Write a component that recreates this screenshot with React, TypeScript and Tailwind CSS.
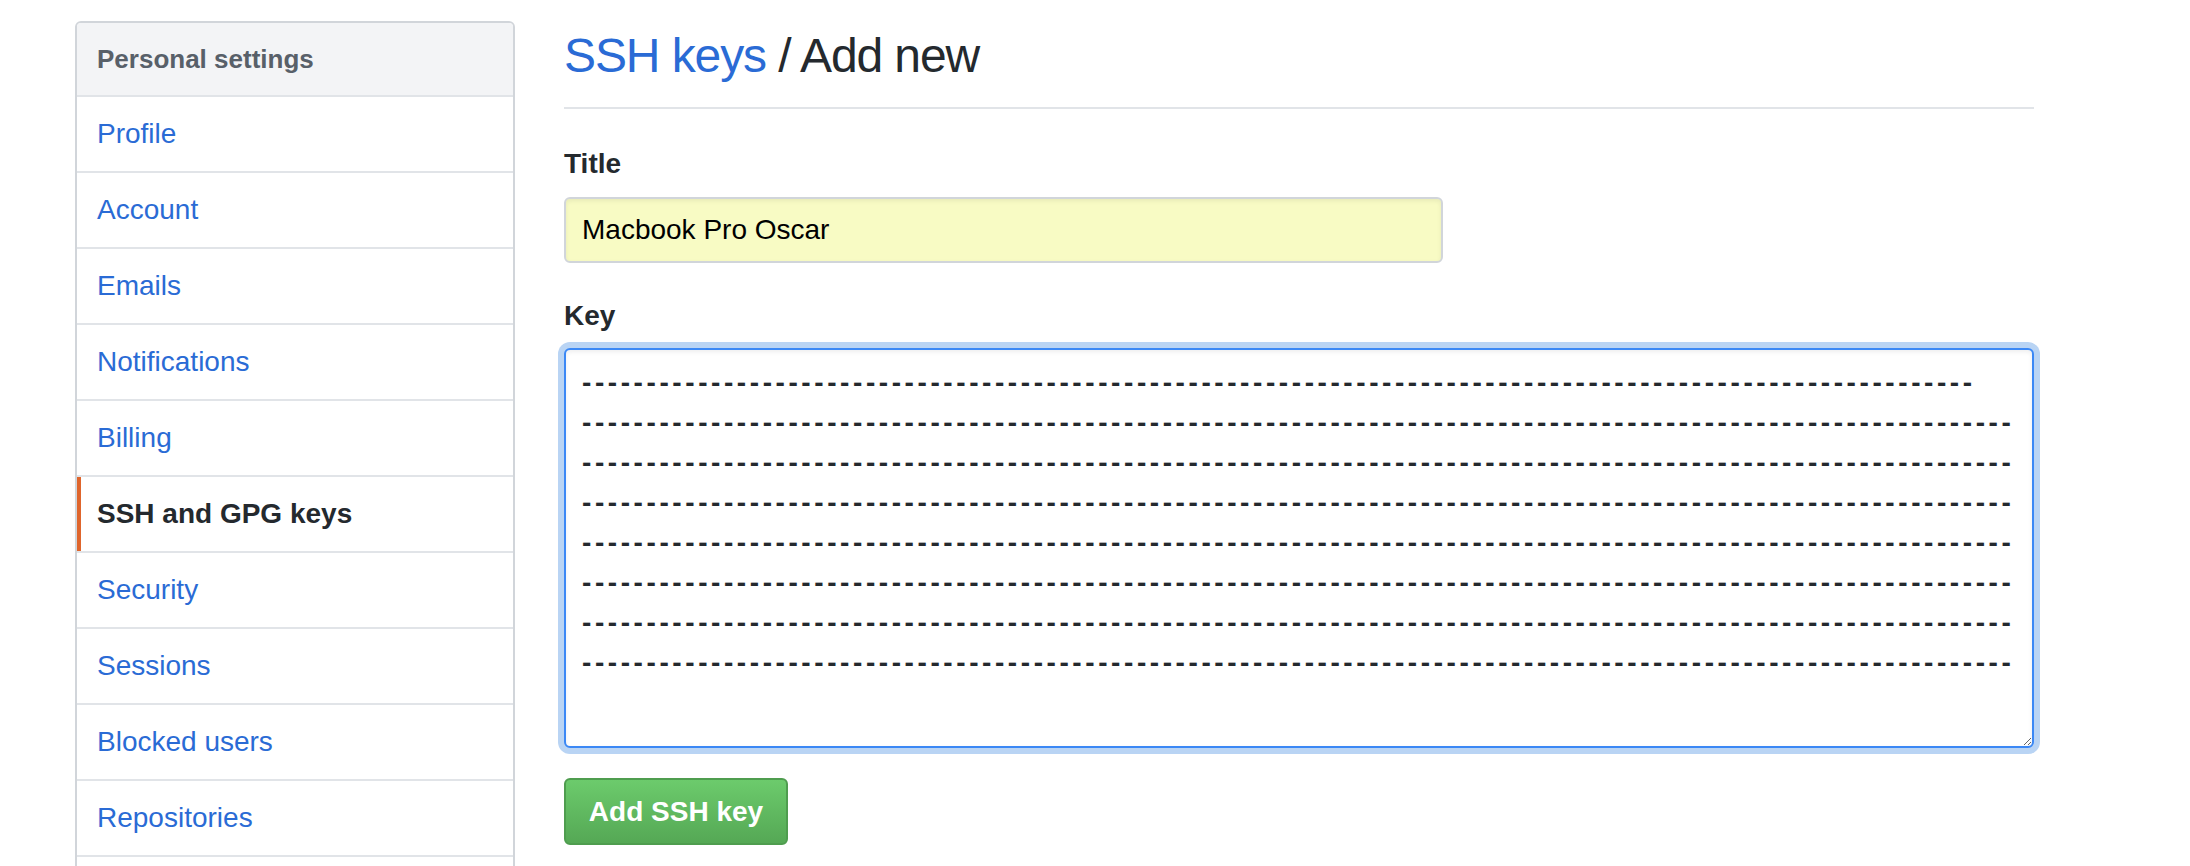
import React from 'react';

const menuItems = [
  'Profile',
  'Account',
  'Emails',
  'Notifications',
  'Billing',
  'SSH and GPG keys',
  'Security',
  'Sessions',
  'Blocked users',
  'Repositories',
];

const keyText = [
  '-'.repeat(108),
  ...Array.from({ length: 7 }, () => '-'.repeat(111)),
].join('\n');

const Sidebar: React.FC = () => {
  return (
    <nav className="w-[440px] shrink-0 self-start border-2 border-[#d1d5da] rounded-t-[6px] overflow-hidden">
      {/* Heading */}
      <div className="h-[72px] flex items-center pl-[20px] bg-[#f3f4f6] text-[26px] font-bold text-[#586069] leading-[40px]">
        Personal settings
      </div>
      {menuItems.map((label) => {
        const active = label === 'SSH and GPG keys';
        return (
          <div
            key={label}
            className="relative h-[76px] border-t-2 border-[#e1e4e8] flex items-center pl-[20px]"
          >
            {active && <div className="absolute left-0 top-0 bottom-0 w-[4px] bg-[#df652c]"></div>}
            <span
              className={`text-[28px] leading-[42px] ${
                active ? 'font-bold text-[#24292e]' : 'text-[#2a6bd5]'
              }`}
            >
              {label}
            </span>
          </div>
        );
      })}
      {/* next item, below the fold */}
      <div className="h-[76px] border-t-2 border-[#e1e4e8]"></div>
    </nav>
  );
};

export default function App() {
  return (
    <div className="h-[866px] w-full overflow-hidden bg-white font-['Liberation_Sans',Arial,sans-serif]">
      <div className="flex pl-[75px] pt-[21px]">
        <Sidebar />

        <main className="ml-[49px] w-[1470px] -mt-[1px]">
          {/* Subhead */}
          <div className="pb-[15px] border-b-2 border-[#e1e4e8]">
            <h1 className="text-[48px] leading-[72px] font-normal tracking-[-1.1px] text-[#24292e]">
              <a className="text-[#2a6bd5]">SSH keys</a> / Add new
            </h1>
          </div>

          <form>
            <label className="block mt-[34px] text-[28px] leading-[42px] font-bold text-[#24292e]">Title</label>
            <input
              readOnly
              value="Macbook Pro Oscar"
              className="block mt-[12px] w-[879px] h-[66px] px-[16px] border-2 border-[#d1d5da] rounded-[6px] bg-[#f8fbc4] text-[28px] text-black outline-none shadow-[inset_0_2px_4px_rgba(27,31,35,0.075)]"
            />

            <label className="block mt-[32px] text-[28px] leading-[42px] font-bold text-[#24292e]">Key</label>
            <textarea
              readOnly
              wrap="off"
              value={keyText}
              className="block mt-[11px] w-[1470px] h-[400px] pt-[13px] px-[16px] border-2 border-[#3b88f5] rounded-[6px] bg-white text-[28px] font-bold leading-[40px] tracking-[3.58px] text-[#24292e] outline-none overflow-hidden resize-y shadow-[0_0_0_6px_rgba(3,102,214,0.28),inset_0_2px_4px_rgba(27,31,35,0.075)]"
            />

            <button
              type="button"
              className="mt-[30px] w-[224px] h-[67px] flex items-center justify-center rounded-[6px] border-2 border-[#4f9d4f] bg-gradient-to-b from-[#6ccb6c] to-[#55a855] text-white text-[28px] font-bold"
            >
              Add SSH key
            </button>
          </form>
        </main>
      </div>
    </div>
  );
}
